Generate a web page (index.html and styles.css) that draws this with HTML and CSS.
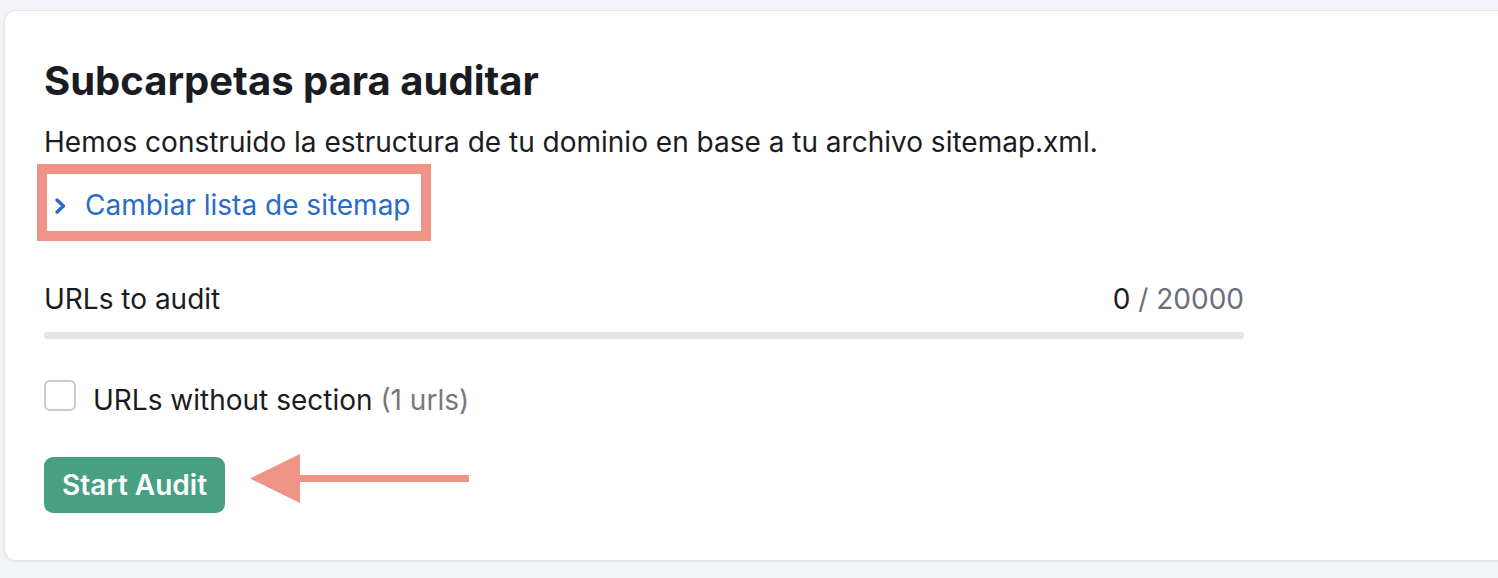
FILE: index.html
```html
<!DOCTYPE html>
<html lang="es">
<head>
<meta charset="utf-8">
<link rel="stylesheet" href="styles.css">
</head>
<body>
<div class="card">
  <h1 class="title">Subcarpetas para auditar</h1>
  <p class="desc">Hemos construido la estructura de tu dominio en base a tu archivo sitemap.xml.</p>
  <div class="highlight">
    <a class="link" href="#">
      <svg class="chev" width="13" height="18" viewBox="0 0 13 18"><path d="M3 3 L9.5 9 L3 15" fill="none" stroke="#2a6bc8" stroke-width="3.4" stroke-linecap="round" stroke-linejoin="round"/></svg>
      <span>Cambiar lista de sitemap</span>
    </a>
  </div>
  <div class="progress">
    <div class="progress-head">
      <span>URLs to audit</span>
      <span class="count">0 <span class="muted">/ 20000</span></span>
    </div>
    <div class="bar"></div>
  </div>
  <label class="check">
    <span class="box"></span>
    <span class="check-text">URLs without section <span class="gray">(1 urls)</span></span>
  </label>
  <div class="actions">
    <button class="btn">Start Audit</button>
    <svg class="arrow" width="220" height="50" viewBox="0 0 220 50"><polygon points="0,24.5 50,0 50,49" fill="#f09387"/><rect x="48" y="21" width="171" height="7" fill="#f09387"/></svg>
  </div>
</div>
</body>
</html>
```
FILE: styles.css
```css
* { box-sizing: border-box; }
html, body { margin: 0; padding: 0; }
body {
  background: #f3f4f8;
  font-family: Inter, "Noto Sans", sans-serif;
  color: #1b1c21;
  width: 1498px;
  height: 578px;
  overflow: hidden;
}
.card {
  margin: 10px 0 0 4px;
  width: 1540px;
  height: 551px;
  background: #fff;
  border: 1px solid #e4e5ea;
  border-radius: 12px;
  box-shadow: 0 1px 2px rgba(0,0,0,0.08);
  padding: 46px 0 0 39px;
}
.title {
  margin: 0;
  font-size: 40px;
  line-height: 48px;
  font-weight: 700;
}
.desc {
  margin: 19px 0 0;
  font-size: 28px;
  line-height: 36px;
}
.highlight {
  display: inline-flex;
  margin: 4px 0 0 -7px;
  border: 10px solid #f09387;
  padding: 13px 10px 8px 7px;
}
.link {
  display: flex;
  align-items: center;
  gap: 18px;
  color: #2a6bc8;
  text-decoration: none;
  font-size: 28px;
  line-height: 36px;
}
.chev { display: block; margin-top: 2px; }
.progress {
  width: 1200px;
  margin-top: 40px;
}
.progress-head {
  display: flex;
  justify-content: space-between;
  font-size: 28px;
  line-height: 36px;
}
.muted { color: #6c6e79; }
.bar {
  margin-top: 15px;
  height: 7px;
  border-radius: 4px;
  background: #e5e5e5;
}
.check {
  display: flex;
  align-items: flex-start;
  gap: 17px;
  margin-top: 41px;
  font-size: 28px;
  line-height: 36px;
}
.box {
  flex: none;
  width: 32px;
  height: 31px;
  border: 2px solid #c8ccd3;
  border-radius: 6px;
  background: #fff;
}
.check-text { margin-top: 2px; }
.gray { color: #77787d; }
.actions {
  display: flex;
  align-items: flex-start;
  gap: 25px;
  margin-top: 39px;
}
.btn {
  width: 181px;
  height: 56px;
  border: none;
  border-radius: 9px;
  background: #48a083;
  color: #fff;
  font-family: Inter, "Noto Sans", sans-serif;
  font-size: 28px;
  font-weight: 600;
  padding: 0;
}
.arrow { display: block; margin-top: -3px; }
```
